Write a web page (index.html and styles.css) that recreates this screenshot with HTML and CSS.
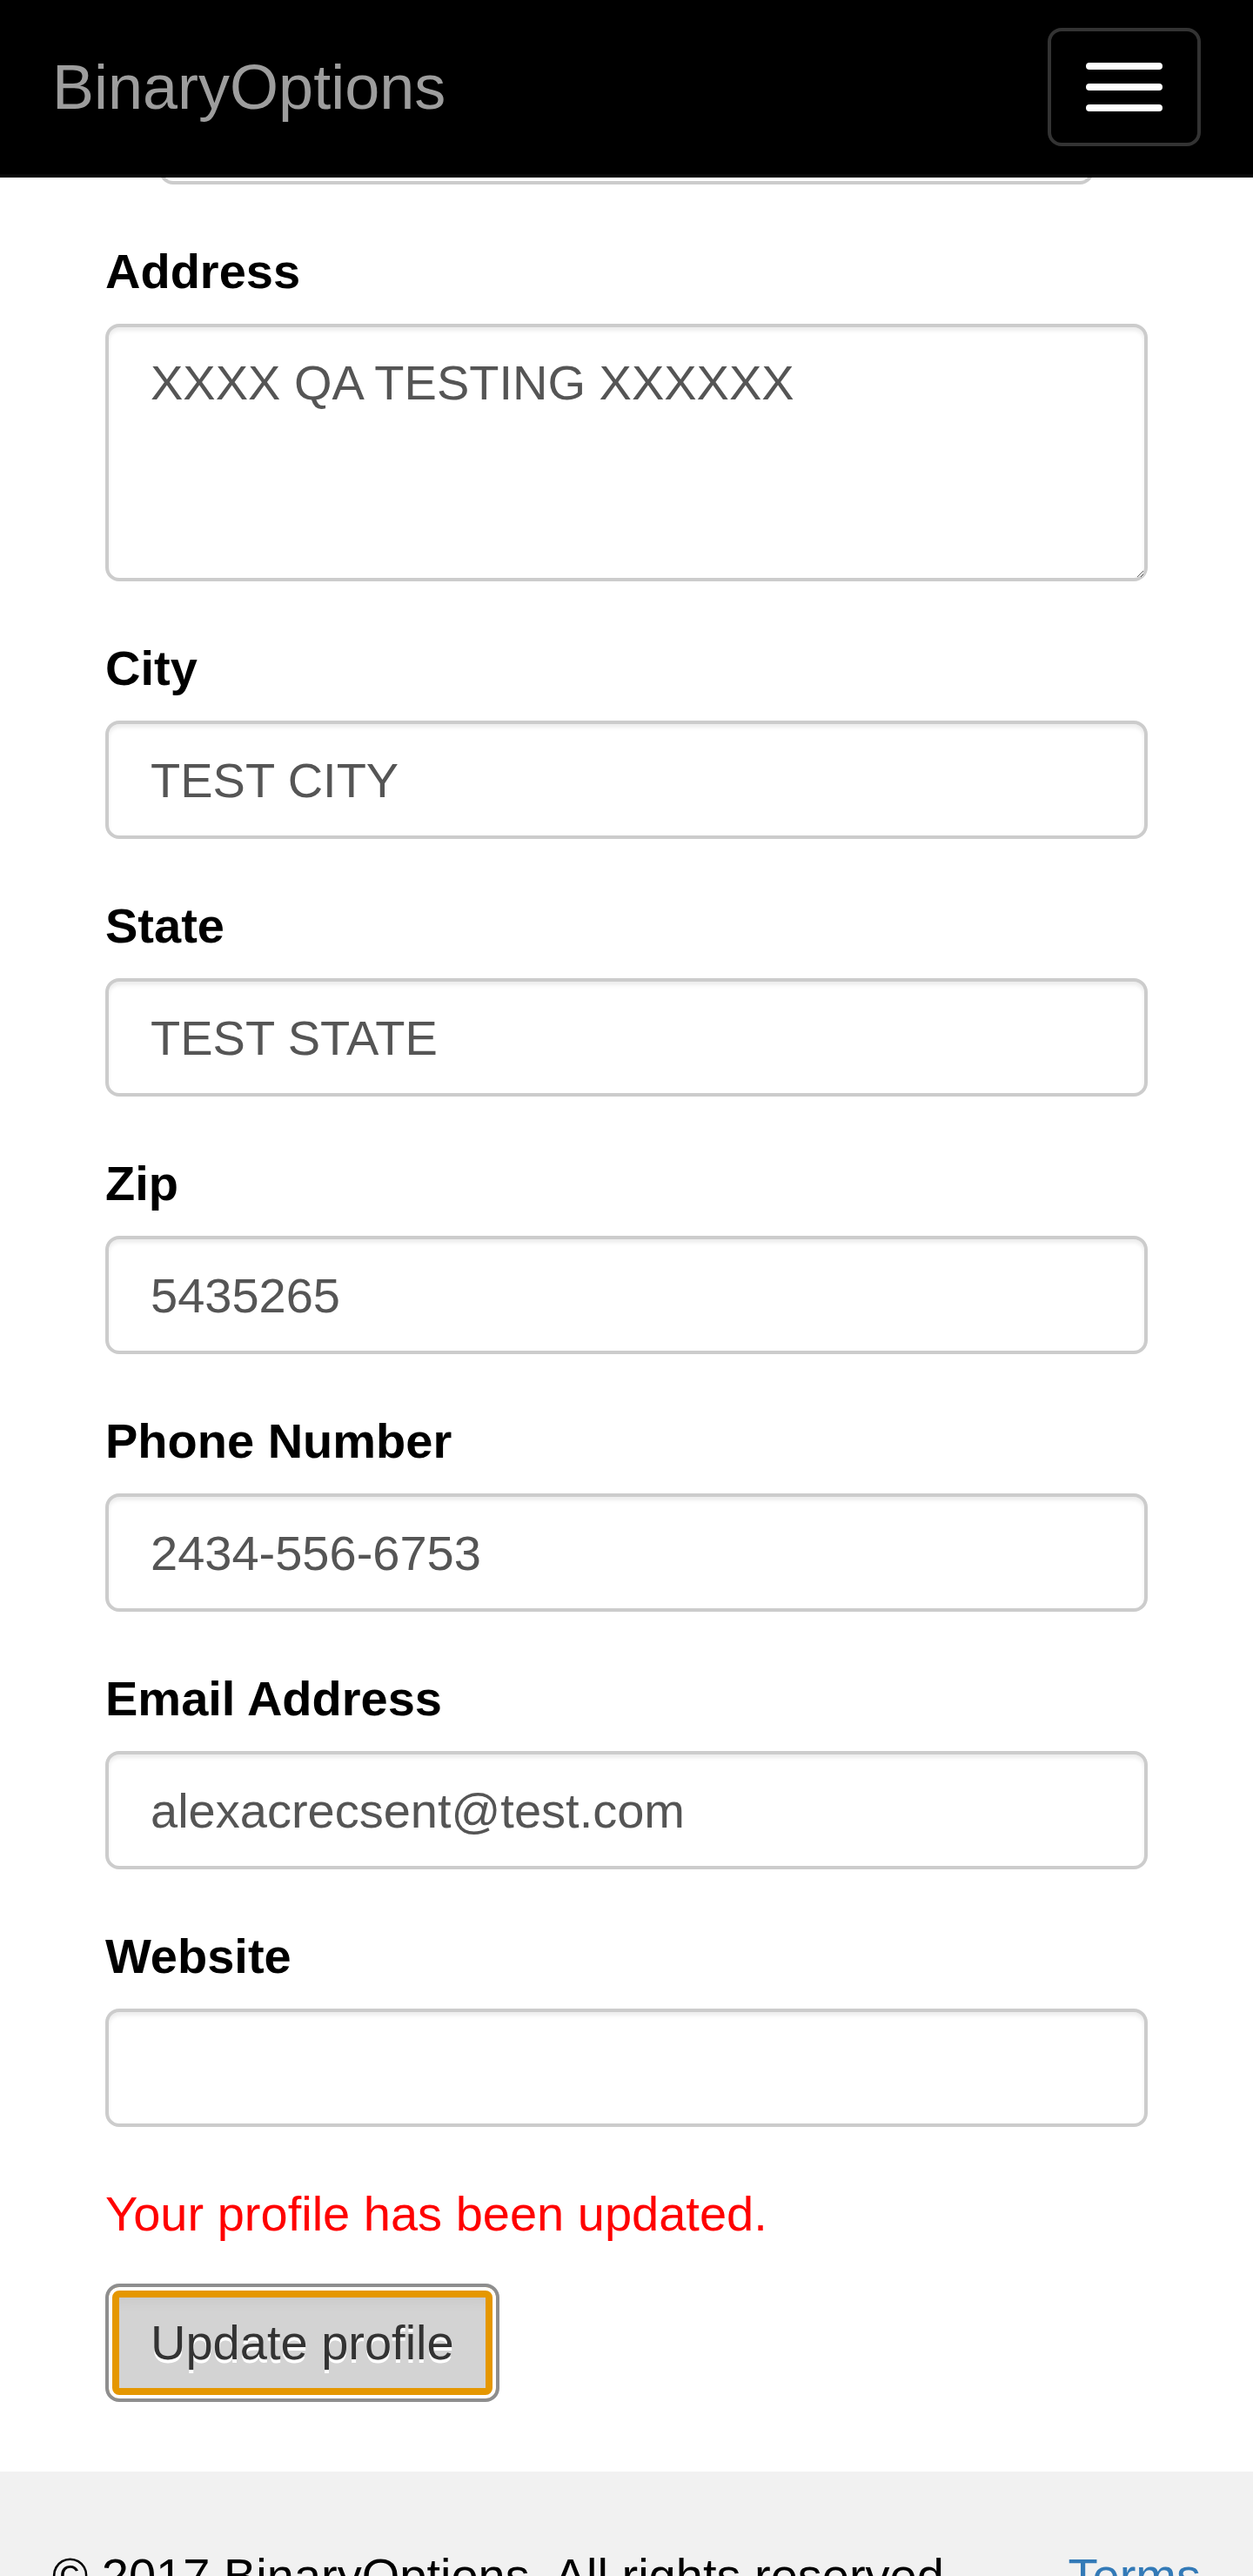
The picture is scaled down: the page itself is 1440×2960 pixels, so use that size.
FILE: index.html
```html
<!DOCTYPE html>
<html lang="en">
<head>
<meta charset="utf-8">
<title>BinaryOptions - Profile</title>
<link rel="stylesheet" href="styles.css">
</head>
<body>
<nav class="navbar">
  <div class="navbar-inner">
    <a class="brand" href="#">BinaryOptions</a>
    <button class="toggle" type="button" aria-label="Toggle navigation">
      <span class="bar"></span>
      <span class="bar"></span>
      <span class="bar"></span>
    </button>
  </div>
</nav>

<main class="content">
  <form class="profile-form">
    <div class="form-group form-group-partial">
      <input class="form-control form-control-narrow" type="text" value="">
    </div>
    <div class="form-group">
      <label class="label" for="address">Address</label>
      <textarea class="form-control textarea" id="address" rows="3">XXXX QA TESTING XXXXXX</textarea>
    </div>
    <div class="form-group">
      <label class="label" for="city">City</label>
      <input class="form-control" id="city" type="text" value="TEST CITY">
    </div>
    <div class="form-group">
      <label class="label" for="state">State</label>
      <input class="form-control" id="state" type="text" value="TEST STATE">
    </div>
    <div class="form-group">
      <label class="label" for="zip">Zip</label>
      <input class="form-control" id="zip" type="text" value="5435265">
    </div>
    <div class="form-group">
      <label class="label" for="phone">Phone Number</label>
      <input class="form-control" id="phone" type="text" value="2434-556-6753">
    </div>
    <div class="form-group">
      <label class="label" for="email">Email Address</label>
      <input class="form-control" id="email" type="text" value="alexacrecsent@test.com">
    </div>
    <div class="form-group">
      <label class="label" for="website">Website</label>
      <input class="form-control" id="website" type="text" value="">
    </div>
    <p class="status">Your profile has been updated.</p>
    <button class="btn-update" type="submit">Update profile</button>
  </form>
</main>

<footer class="footer">
  <p class="copyright">© 2017 BinaryOptions. All rights reserved.</p>
  <a class="terms" href="#">Terms</a>
</footer>
</body>
</html>
```

FILE: styles.css
```css
* {
  box-sizing: border-box;
}

html, body {
  margin: 0;
  padding: 0;
  background: #fff;
}

body {
  font-family: "Liberation Sans", Arial, Helvetica, sans-serif;
  font-size: 56px;
  line-height: 80px;
  color: #333;
}

/* Navbar (fixed, overlays the scrolled content) */
.navbar {
  position: fixed;
  top: 0;
  left: 0;
  right: 0;
  z-index: 10;
  height: 204px;
  background: #000;
  border-bottom: 4px solid #080808;
}

.navbar-inner {
  display: flex;
  justify-content: space-between;
  align-items: flex-start;
  padding: 0 60px;
}

.brand {
  display: block;
  padding: 60px 0;
  font-size: 72px;
  line-height: 80px;
  color: #9d9d9d;
  text-decoration: none;
}

.toggle {
  display: flex;
  flex-direction: column;
  gap: 16px;
  margin-top: 32px;
  padding: 36px 40px;
  width: 176px;
  height: 136px;
  background: transparent;
  border: 4px solid #333;
  border-radius: 16px;
  cursor: pointer;
}

.bar {
  display: block;
  width: 88px;
  height: 8px;
  border-radius: 4px;
  background: #fff;
}

/* Form */
.content {
  padding: 76px 121px 0 121px;
}

.form-group {
  margin-bottom: 60px;
}

.form-group-partial {
  padding: 0 62px;
}

.label {
  display: block;
  margin-bottom: 20px;
  font-weight: bold;
  font-size: 56px;
  line-height: 80px;
  color: #000;
}

.form-control {
  display: block;
  width: 100%;
  height: 136px;
  margin: 0;
  padding: 24px 48px;
  font-family: "Liberation Sans", Arial, Helvetica, sans-serif;
  font-size: 56px;
  line-height: 80px;
  color: #555;
  background: #fff;
  border: 4px solid #ccc;
  border-radius: 16px;
  box-shadow: inset 0 4px 4px rgba(0, 0, 0, 0.075);
  outline: none;
}

.textarea {
  height: 296px;
  resize: vertical;
}

.status {
  margin: 0 0 40px 0;
  font-size: 56px;
  line-height: 80px;
  color: #f00;
}

.btn-update {
  display: inline-block;
  height: 136px;
  margin: 0 0 80px 0;
  padding: 24px 48px;
  font-family: "Liberation Sans", Arial, Helvetica, sans-serif;
  font-size: 56px;
  line-height: 80px;
  color: #333;
  text-shadow: 0 4px 0 #fff;
  background: #d3d3d3;
  border: 4px solid #8e8e8e;
  border-radius: 16px;
  box-shadow:
    inset 0 0 0 4px #fff,
    inset 0 0 0 12px #e59700,
    inset 0 24px 18px -10px rgba(0, 0, 0, 0.06);
  cursor: pointer;
}

/* Footer (the page ends at the bottom edge of the window) */
.footer {
  display: flex;
  justify-content: space-between;
  align-items: flex-start;
  height: 120px;
  overflow: hidden;
  padding: 80px 60px 0 60px;
  background: #f1f1f1;
}

.copyright {
  margin: 0;
  font-size: 56px;
  line-height: 80px;
  color: #000;
}

.terms {
  font-size: 56px;
  line-height: 80px;
  color: #337ab7;
  text-decoration: none;
}
```
